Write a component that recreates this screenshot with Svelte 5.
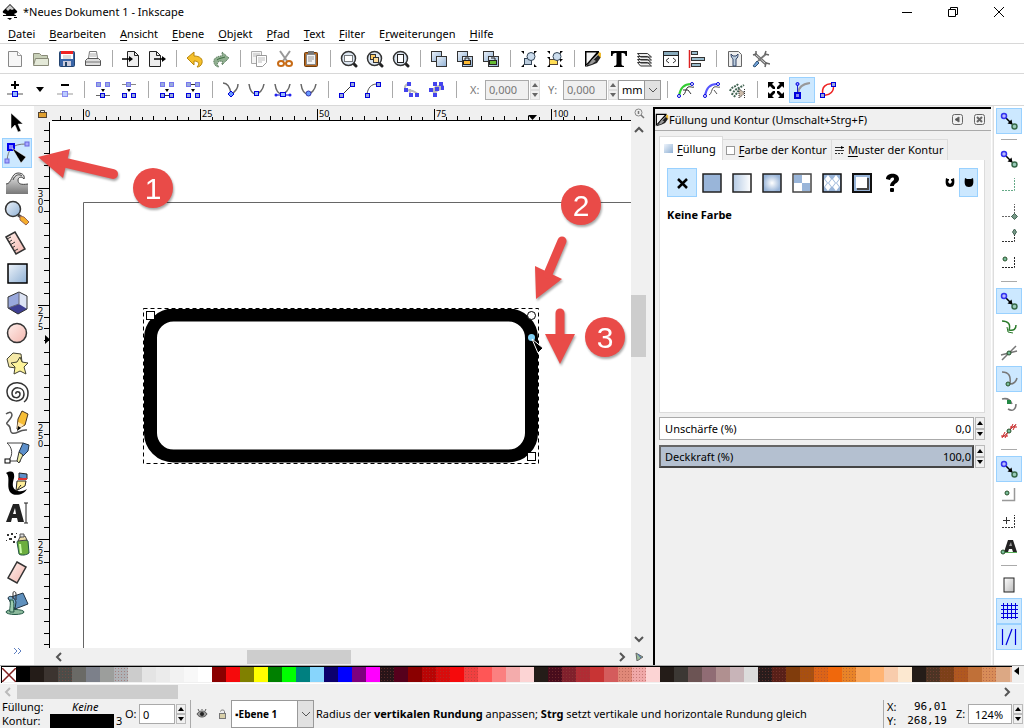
<script lang="ts">
  const menus = [
    ['', 'D', 'atei'],
    ['', 'B', 'earbeiten'],
    ['', 'A', 'nsicht'],
    ['', 'E', 'bene'],
    ['', 'O', 'bjekt'],
    ['', 'P', 'fad'],
    ['', 'T', 'ext'],
    ['', 'F', 'ilter'],
    ['E', 'r', 'weiterungen'],
    ['', 'H', 'ilfe']
  ];

  const sheet = (x: number, y: number) =>
    `<rect x="${x}.5" y="${y}.5" width="10" height="10" fill="url(#blue)" stroke="#333"/>`;
  const nodeBox = (x: number, y: number, c = '#00d') =>
    `<rect x="${x}.5" y="${y}.5" width="4" height="4" fill="#9ad" stroke="${c}"/>`;
  const magnifier =
    '<path d="M13 13l3 3" stroke="#222" stroke-width="3" stroke-linecap="round"/><circle cx="8.5" cy="8.5" r="7" fill="#dde7f2" stroke="#333" stroke-width="1.5"/>';
  const snapPair =
    '<path d="M6 6l6 6" stroke="#000" stroke-width="1.5"/><path d="M12.500 12.500l-5-1 4-4z"/><circle cx="4" cy="4" r="2.5" fill="#bbf" stroke="#33e" stroke-width="1.5"/><circle cx="14.5" cy="14.5" r="2.5" fill="#9cb" stroke="#386a4a" stroke-width="1.5"/>';
  const curve = '<path d="M1 3c1 7 4 10 7 10s7-4 8-10" fill="none" stroke="#666" stroke-width="1.5"/>';
  const dotGreen = (x: number, y: number) =>
    `<circle cx="${x}" cy="${y}" r="2" fill="#7b9" stroke="#285028"/>`;

  const icons: Record<string, string> = {
    new: '<path d="M2.500 1.500h9l4 4v11h-13z" fill="#f7f7f7" stroke="#888"/><path d="M11.500 1.500v4h4" fill="#fff" stroke="#999"/>',
    open: '<path d="M1.500 14.500v-11h6l2 2h6v9z" fill="#c8d0b8" stroke="#888a78"/><path d="M1.500 15.500l2-7h13v7z" fill="#e4e9d8" stroke="#888a78"/>',
    save: '<rect x="1.500" y="1.500" width="15" height="15" rx="1" fill="#3a66a8" stroke="#24446f"/><rect x="3" y="1" width="12" height="8" fill="#fff"/><rect x="3" y="1" width="12" height="3" fill="#e22"/><path d="M5 6h8M5 8h8" stroke="#bbb"/><rect x="5" y="11" width="8" height="5" fill="#ccd"/><rect x="7" y="12" width="2" height="4" fill="#246"/>',
    print: '<path d="M4.500 8.500l1-7h7l1 7" fill="#fff" stroke="#777"/><path d="M6 4h6M6 6h6" stroke="#aaa"/><path d="M1.500 15.500v-5l2-2h11l2 2v5z" fill="#ddd" stroke="#555"/><path d="M2 12h14" stroke="#777"/>',
    import: '<path d="M5.500 1.500h7l4 4v11h-11z" fill="#eee" stroke="#222"/><path d="M12.500 1.500v4h4" fill="none" stroke="#222"/><path d="M0 9h8" stroke="#000" stroke-width="1.500"/><path d="M11 9l-4-3v6z"/>',
    export: '<path d="M1.500 1.500h7l4 4v11h-11z" fill="#eee" stroke="#222"/><path d="M8.500 1.500v4h4" fill="none" stroke="#222"/><path d="M6 9h9" stroke="#000" stroke-width="1.500"/><path d="M18 9l-4-3v6z"/>',
    undo: '<path d="M1 8l7-6v4c6 0 9 3 8 7-1 3-3 4-5 4 3-3 2-6-3-6v4z" fill="#f5c02c" stroke="#b8860b"/>',
    redo: '<path d="M17 8l-7-6v4c-6 0-9 3-8 7 1 3 3 4 5 4-3-3-2-6 3-6v4z" fill="#8fae8f" stroke="#47694b" stroke-dasharray="1 1"/><path d="M5 10c2-2 6-2 8-3" stroke="#3c6b40" fill="none"/>',
    copy: '<path d="M1.500 1.500h10v12h-10z" fill="#f4f4f4" stroke="#aaa"/><path d="M6.500 5.500h10v7l-4 4h-6z" fill="#fff" stroke="#999"/><path d="M8 8h7M8 10h7M8 12h4M3 4h7M3 6h3" stroke="#bbb"/>',
    cut: '<path d="M4 1l7 10M14 1L7 11" stroke="#999" stroke-width="2"/><ellipse cx="5" cy="13.500" rx="3" ry="2.500" fill="none" stroke="#c76b16" stroke-width="2"/><ellipse cx="13" cy="13.500" rx="3" ry="2.500" fill="none" stroke="#c76b16" stroke-width="2"/>',
    paste: '<rect x="2.500" y="2.500" width="13" height="14" rx="1" fill="#b5661d" stroke="#6e3c0c"/><rect x="4.500" y="4.500" width="9" height="10" fill="#f4f4f4" stroke="#888"/><rect x="6" y="1" width="6" height="3" fill="#777"/><path d="M6 7h6M6 9h6M6 11h4" stroke="#999"/>',
    zoomSel: magnifier + '<rect x="4.500" y="5.500" width="8" height="6" fill="#fff" stroke="#000" stroke-dasharray="1 1"/>',
    zoomDraw: magnifier + '<rect x="4.500" y="4.500" width="5" height="5" fill="#fc6" stroke="#333"/><rect x="7.500" y="7.500" width="5" height="5" fill="#fd9" stroke="#333"/>',
    zoomPage: magnifier + '<rect x="5.500" y="4.500" width="6" height="8" fill="#fff" stroke="#222"/>',
    duplicate: sheet(1, 1) + sheet(6, 6),
    clone: sheet(1, 1) + sheet(6, 6) + '<rect x="7.500" y="10.500" width="7" height="4" fill="#fb3" stroke="#222"/><path d="M9 10V8h4v2" fill="none" stroke="#222"/>',
    unclone: sheet(1, 1) + sheet(6, 6) + '<rect x="7.500" y="10.500" width="7" height="4" fill="#6b3" stroke="#222"/><path d="M9 8h4v2" fill="none" stroke="#222"/>',
    group: '<rect x="4.500" y="8.500" width="7" height="6" fill="#bcd" stroke="#345"/><circle cx="11" cy="6.500" r="4" fill="#cde" stroke="#345"/><path d="M1 1h3v3zM17 1h-3v3zM1 17h3v-3zM17 17h-3v-3z"/>',
    ungroup: '<rect x="3.500" y="9.500" width="8" height="5" fill="#fd5" stroke="#543"/><circle cx="11" cy="6.500" r="4" fill="#cde" stroke="#345"/><path d="M1 1h3v3zM17 1h-3v3zM1 17h3v-3zM17 17h-3v-3zM1 7h3v3zM17 9h-3v3z"/>',
    fill: '<path d="M1 1h14v2L5 13l-4 4z"/><path d="M2.500 2.500h10L2.500 14z" fill="#f4f4f4"/><path d="M15 4l2 3-4 6-5 2-6 2 2-4 6-4z" fill="#222"/><path d="M15 2l2 1v5l-3-3z" fill="#eb3"/><path d="M9 9l3 2-4 3-4 1z" fill="#999"/>',
    text: '<path d="M1 1h16v5h-1.500c0-2-1-3-3-3h-1v11c0 1 1 2 2.500 2v1h-10v-1c1.500 0 2.500-1 2.500-2V3h-1c-2 0-3 1-3 3H1z"/>',
    layers: '<path d="M1.500 12.500h10l4 3.500h-11zM1.500 9.500h10l4 3.500h-11zM1.500 6.500h10l4 3.500h-11zM1.500 3.500h10l4 3.500h-11z" fill="#eee" stroke="#333"/>',
    xml: '<rect x="1.500" y="1.500" width="15" height="15" fill="#fff" stroke="#222"/><path d="M2 3.500h14" stroke="#8ab" stroke-width="3"/><path d="M2 5.500h14" stroke="#222"/><path d="M7 8l-3 2.500L7 13M11 8l3 2.500L11 13" fill="none" stroke="#333"/>',
    align: '<path d="M1.500 0v18" stroke="#d22" stroke-width="1.500"/><rect x="3.500" y="1.500" width="6" height="3" fill="#9bc" stroke="#333"/><rect x="3.500" y="7.500" width="13" height="3" fill="#9bc" stroke="#333"/><rect x="3.500" y="13.500" width="9" height="3" fill="#9bc" stroke="#333"/>',
    docProps: '<path d="M2.500 1.500h10l3 3v12h-13z" fill="#eee" stroke="#666"/><path d="M5 4c0 3 1 4 2 5v7h3V9c2-1 2-3 2-5l-2 2H7z" fill="#bcd" stroke="#346"/>',
    prefs: '<path d="M3 4l11 10" stroke="#666" stroke-width="3"/><path d="M3 4l11 10" stroke="#ddd"/><path d="M14 4L6 11" stroke="#777" stroke-width="2"/><path d="M4 1v3L1 5M14 1l-1 3 4 1M13 17l1-4 4 1" fill="none" stroke="#666" stroke-width="1.500"/><path d="M1 16l4-5 2 2-4 4z" fill="#6ea0d8" stroke="#357"/>',
    addNode: '<path d="M9 0v8M5 4h8" stroke="#000" stroke-width="2"/><path d="M1 13h16" stroke="#555"/><rect x="6.500" y="10.500" width="5" height="5" fill="#9bf" stroke="#00d"/>',
    delNode: '<path d="M5 4h8" stroke="#000" stroke-width="2"/><path d="M1 13h16" stroke="#999"/><rect x="6.500" y="10.500" width="5" height="5" fill="#bcf" stroke="#88e"/>',
    join: nodeBox(2, 1, '#77e') + nodeBox(11, 1, '#77e') + '<path d="M2 14.500h14" stroke="#666"/>' + nodeBox(6, 12) + '<path d="M9 11L7 8h4z"/>',
    break: '<path d="M2 3.500h14" stroke="#888"/>' + nodeBox(6, 1, '#77e') + nodeBox(2, 12) + nodeBox(11, 12) + '<path d="M9 11L7 8h4z"/>',
    joinSeg: nodeBox(2, 1, '#77e') + nodeBox(11, 1, '#77e') + '<path d="M5 14.500h8" stroke="#333"/>' + nodeBox(2, 12) + nodeBox(11, 12) + '<path d="M9 11L7 8h4z"/>',
    delSeg: '<path d="M5 3.500h8" stroke="#333"/>' + nodeBox(2, 1, '#77e') + nodeBox(11, 1, '#77e') + nodeBox(2, 12) + nodeBox(11, 12) + '<path d="M9 11L7 8h4z"/>',
    cusp: '<path d="M1 2c5 0 7 4 8 11 4-2 7-6 7-10" fill="none" stroke="#666" stroke-width="1.500"/><path d="M9 10l3 3-3 3-3-3z" fill="#69f" stroke="#00d"/>',
    smooth: curve + '<rect x="6.500" y="10.500" width="4" height="4" fill="#9bf" stroke="#00d"/>',
    symmetric: curve + '<path d="M2 14h13" stroke="#00d"/><circle cx="2" cy="14" r="1.500" fill="#22e"/><circle cx="16" cy="14" r="1.500" fill="#22e"/><rect x="6.500" y="11.500" width="5" height="4" fill="#9bf" stroke="#00d"/>',
    auto: curve + '<circle cx="8.500" cy="12.500" r="2.500" fill="#69f" stroke="#33a"/>',
    line: '<path d="M4 14L14 4" stroke="#333"/>' + nodeBox(1, 12) + nodeBox(12, 1),
    arc: '<path d="M3 13C4 7 7 3 13 3" fill="none" stroke="#555"/>' + nodeBox(1, 12) + nodeBox(12, 1),
    objPath: '<path d="M9 3C3 2 1 8 5 9s8 0 11 5M8 8v8" fill="none" stroke="#bbb" stroke-width="2"/><path d="M5 1h4v4H5zM2 7h4v4H2zM7 12h4v4H7zM13 12h4v4h-4z" fill="#44e"/>',
    strokePath: '<path d="M4 10c1-5 6-7 12-6l-2 5c-4 0-6 2-7 7z" fill="#bbb"/><path d="M5 1h4v4H5zM11 1h4v4h-4zM1 7h4v4H1zM7 6h4v4H7zM13 5h3v4h-3zM5 12h4v4H5z" fill="#44e"/>',
    clipPath: '<path d="M2 15C3 8 7 3 14 3" fill="none" stroke="#3c3" stroke-width="2"/><path d="M6 14c3-1 2-6 5-8 3-1 4 1 6 0M6 9h5l3 4" fill="none" stroke="#333"/><circle cx="2" cy="15" r="1.500" fill="#fff" stroke="#00d"/><circle cx="15" cy="3" r="1.500" fill="#fff" stroke="#00d"/>',
    maskPath: '<path d="M2 15C3 8 7 3 14 3" fill="none" stroke="#55f" stroke-width="2"/><path d="M6 14c3-1 2-6 5-8 3-1 4 1 6 0M11 9l3 4" fill="none" stroke="#555"/><circle cx="2" cy="15" r="1.500" fill="#fff" stroke="#00d"/><circle cx="15" cy="3" r="1.500" fill="#fff" stroke="#00d"/>',
    lpe: '<path d="M1 10c2-5 6-4 8-7M3 14c2-6 6-6 12-10M5 16l5-7" fill="none" stroke="#465" stroke-width="2" stroke-dasharray="2 1"/><path d="M10 8v9l6-5zM15.500 8v9" fill="#cba" stroke="#333" stroke-dasharray="1 1"/>',
    transform: '<path d="M1 1h6L5 3l3 3v2H6L3 5 1 7zM17 1h-6l2 2-3 3v2h2l3-3 2 2zM1 17h6l-2-2 3-3v-2H6l-3 3-2-2zM17 17h-6l2-2-3-3v-2h2l3 3 2-2z"/>',
    handles: '<path d="M5 13C5 6 9 3 17 2" fill="none" stroke="#999" stroke-width="2"/><path d="M4.500 12V3" stroke="#22c"/><circle cx="4.500" cy="3" r="1.500" fill="#88f" stroke="#00d"/><rect x="2" y="12" width="5" height="5" fill="#88e" stroke="#00d" stroke-width="2"/>',
    outline: '<path d="M4 14C2 6 7 2 14 3c2 7-3 12-10 11z" fill="none" stroke="#e22" stroke-width="1.500"/>' + nodeBox(1, 12) + nodeBox(12, 1),
    snap: snapPair,
    bbox: '<path d="M2 14.500h12.500V2" fill="none" stroke="#6a8" stroke-dasharray="2 1"/>',
    bboxCorner: '<path d="M2 14.500h12.500V2" fill="none" stroke="#666" stroke-dasharray="2 1"/><path d="M14.500 11.500l3 3-3 3-3-3z" fill="#798" stroke="#465"/>',
    bboxEdge: '<path d="M2 13.500h12.500V4" fill="none" stroke="#333" stroke-dasharray="2 1"/><path d="M14.500 1l2 3-2 3-2-3z" fill="#798" stroke="#465"/>',
    bboxMid: '<path d="M2 13.500h12.500V2" fill="none" stroke="#222" stroke-dasharray="2 1"/>' + dotGreen(5, 5),
    snapPath: '<path d="M2 3c6 0 9 3 7 9 5 1 7-1 7-5" fill="none" stroke="#2a7a2a" stroke-width="1.500"/><path d="M7 9l1 5 5 1" fill="none" stroke="#2a7a2a"/>',
    snapCross: '<path d="M2 16L16 2M1 11L17 7" stroke="#777" stroke-width="1.500"/>' + dotGreen(9, 9),
    snapCusp: '<path d="M2 2c7 0 9 4 8 12 4 0 6-2 7-6" fill="none" stroke="#777" stroke-width="1.500"/>' + dotGreen(8, 14),
    snapSmooth: '<path d="M2 3c4-1 8 0 10 5M8 13c5 3 8 0 8-5" fill="none" stroke="#777" stroke-width="1.500"/><rect x="7" y="4" width="4" height="4" fill="#284"/>',
    snapMid: '<path d="M3 15L15 3" stroke="#a66"/><path d="M2 16l3-6M5 16l3-6M10 8l3-6M13 8l3-6M1 14h7M10 5h7" stroke="#c22"/>' + dotGreen(9, 9),
    snapCenter: '<path d="M2 14.500h12.500V2" fill="none" stroke="#999" stroke-width="1.500"/>' + dotGreen(7, 7),
    snapRot: '<path d="M3 8.500h7M6.500 5v7" stroke="#333"/><path d="M2 15.500h12.500V3" fill="none" stroke="#333" stroke-dasharray="2 1"/>',
    snapText: '<path d="M4 14L8 2h5l4 12h-4l-1-3H9l-1 3z" fill="#222"/><path d="M9 8h3l-1-4z" fill="#999"/><path d="M1 14.500h16" stroke="#5a5"/>' + dotGreen(3, 14),
    snapPage: '<rect x="4" y="2" width="10" height="14" fill="url(#gray)" stroke="#222"/>',
    snapGrid: '<path d="M3.500 1v16M7.500 1v16M11.500 1v16M15.500 1v16M1 3.500h17M1 7.500h17M1 11.500h17M1 15.500h17" stroke="#00d" />',
    snapGuide: '<path d="M2.500 1v16M15.500 1v16M6 17L12 1" stroke="#00d" fill="none" stroke-width="1.200"/>'
  };

  const tools: [string, string][] = [
    ['Auswählen', '<path d="M7 3v16l4-4 3 7 3-1-3-7h5z" stroke="#fff" stroke-width=".5"/>'],
    ['Knoten', '<path d="M3 21C4 9 8 4 22 4" fill="none" stroke="#777"/><rect x="1" y="19" width="4" height="4" fill="#aaf" stroke="#66d"/><rect x="21" y="2" width="4" height="4" fill="#aaf" stroke="#66d"/><rect x="4" y="4" width="6" height="6" fill="#88f" stroke="#00e" stroke-width="2"/><path d="M8 8l14 9-5 6z" stroke="#fff" stroke-width=".5"/>'],
    ['Optimieren', '<path d="M2 24V14c6 0 6-11 12-11 5 0 7 3 6 6-2-3-6-2-6 1 0 4 3 5 10 4v10z" fill="url(#wave)"/><path d="M2 14c6 0 5-11 12-11 5 0 7 3 6 6-2-3-6-2-6 1 0 4 3 5 10 4M9 10c2-6 7-6 9-4" fill="none" stroke="#444"/>'],
    ['Zoom', '<path d="M14 15l3 2" stroke="#444" stroke-width="3"/><path d="M16 16l4 1 5 5-3 3-6-5z" fill="#f5ad2c" stroke="#965"/><circle cx="9" cy="9" r="7.500" fill="url(#blue)" stroke="#333" stroke-width="1.500"/>'],
    ['Maßband', '<path d="M2 7l9-5 10 17-9 5z" fill="url(#pink)" stroke="#333" stroke-width="1.500"/><path d="M3 9l4-2M5 12l3-2M6 15l5-3M8 18l3-2M10 21l4-2" stroke="#333"/>'],
    ['Rechteck', '<rect x="4" y="4" width="19" height="19" fill="url(#blue)" stroke="#000" stroke-width="1.500"/>'],
    ['3D-Box', '<path d="M4 7l11-5 8 4v13l-9 5-10-6z" fill="#99a8dc"/><path d="M15 2v13l8 4V6z" fill="#dde4f5"/><path d="M15 14l8 5-9 5-10-6z" fill="#3e3e92"/><path d="M4 7l11-5 8 4v13l-9 5-10-6z" fill="none" stroke="#333"/><path d="M15 2v12L4 18" fill="none" stroke="#667"/>'],
    ['Kreis', '<circle cx="13" cy="13" r="9.500" fill="url(#pink)" stroke="#333" stroke-width="1.500"/>'],
    ['Stern', '<path d="M3 9l6-6 8 1 1 8-6 6-7-1z" fill="#f5e9a8" stroke="#443"/><path d="M16 7l2 5 6 1-4 4 2 7-6-3-6 3 1-7-4-4 6-1z" fill="#fdf39a" stroke="#443"/>'],
    ['Spirale', '<path d="M12 14c-1-3 4-3 4 0 0 5-8 5-8-1 0-7 12-7 12 1 0 10-17 9-17-2C3 -1 24 0 24 13c0 4-1 7-4 9" fill="none" stroke="#333" stroke-width="1.500"/>'],
    ['Freihand', '<path d="M2 4c5-4 8 0 4 5s-4 4-2 6c4 2 1 7 4 8 5 2 7-4 15-3" fill="none" stroke="#555" stroke-width="1.500"/><path d="M13 19l1-10 4-8 6 3-3 11z" fill="#f6bd36" stroke="#432"/><path d="M13 20l1-8 6 3z" fill="#ffe4b0"/><path d="M13 21l1-5 3 2z"/>'],
    ['Bézier', '<path d="M3 3h16M3 3c5 4 7 12 1 18h13" fill="none" stroke="#444"/><path d="M15 12l4-9 6 2-1 6-5 5z" fill="#5c8fca" stroke="#234"/><path d="M15 12l4 3-4 8-2-2z" fill="#eea" stroke="#333"/><rect x="1" y="19" width="5" height="4" fill="#fff" stroke="#000"/>'],
    ['Kalligrafie', '<path d="M2 3c6-3 9-1 8 5-2 7-2 11 4 13 4 1 7-1 9-2-3 6-13 8-17 3C2 16 7 7 2 3z"/><path d="M15 3l8 1v5l-8-1z" fill="#5c8fca" stroke="#222"/><path d="M14 8h9v2h-9z" fill="#d33"/><path d="M12 21l1-10h9l-1 5z" fill="#fe9" stroke="#222"/><path d="M13 20l4-5" stroke="#222"/>'],
    ['Text', '<path d="M2 22L9 4h6l5 18h-6l-1-4H8l-1 4zM9 14h3l-1-6z" fill-rule="evenodd" fill="#222"/><path d="M20 3h4M22 3v20M20 23h4" stroke="#222" fill="none"/>'],
    ['Sprühdose', '<path d="M13 12c0-2 10-3 11-1l1 12c-2 2-8 3-10 1z" fill="#6cae3e" stroke="#254"/><path d="M16 14l1 9" stroke="#cfa" stroke-width="2"/><path d="M14 11l2-4 5-1 2 4z" fill="#eda" stroke="#444"/><path d="M16 4h4v3h-4z" fill="#ddd" stroke="#555"/><path d="M3 4h2v2H3zM7 3h2v2H7zM5 8h3v2H5zM10 6h2v2h-2zM9 11h2v2H9zM2 10h1v1H2zM12 3h1v1h-1z" fill="#333"/>'],
    ['Radierer', '<path d="M13 2l9 5-9 16-9-5z" fill="url(#pink)" stroke="#333" stroke-width="1.500"/>'],
    ['Farbeimer', '<ellipse cx="11" cy="22" rx="9" ry="2.500" fill="#8cba9c" stroke="#254"/><path d="M4 8l15-5 5 11-13 5z" fill="#5f90bd" stroke="#234"/><path d="M4 8c1-3 6-2 8 4l-1 7z" fill="#7fb0cc" stroke="#234"/><path d="M6 10c1 6-1 9 0 12h4c-1-4 1-7-1-12z" fill="#9ccbae" stroke="#254"/><path d="M9 9V3c0-2 3-2 3 1v6" fill="none" stroke="#333"/>']
  ];

  const commands = [
    ['new', 'open', 'save', 'print'],
    ['import', 'export'],
    ['undo', 'redo'],
    ['copy', 'cut', 'paste'],
    ['zoomSel', 'zoomDraw', 'zoomPage'],
    ['duplicate', 'clone', 'unclone'],
    ['group', 'ungroup'],
    ['fill', 'text', 'layers', 'xml', 'align'],
    ['docProps', 'prefs']
  ];

  const nodeGroups = [
    ['join', 'break'],
    ['joinSeg', 'delSeg'],
    ['cusp', 'smooth', 'symmetric', 'auto'],
    ['line', 'arc'],
    ['objPath', 'strokePath']
  ];

  const snapGroups = [
    ['snap'],
    ['snap', 'bbox', 'bboxCorner', 'bboxEdge', 'bboxMid'],
    ['snap', 'snapPath', 'snapCross', 'snapCusp', 'snapSmooth', 'snapMid'],
    ['snap', 'snapCenter', 'snapRot', 'snapText'],
    ['snapPage', 'snapGrid', 'snapGuide']
  ];
  const activeSnaps = ['0-0', '2-0', '2-3', '3-0', '4-1', '4-2'];

  const paints: [string, string][] = [
    ['Einfache Farbe', '<rect x="1" y="1" width="18" height="18" fill="#99b5d9" stroke="#222" stroke-width="1.500"/>'],
    ['Linearer Farbverlauf', '<rect x="1" y="1" width="18" height="18" fill="url(#linear)" stroke="#222" stroke-width="1.500"/>'],
    ['Radialer Farbverlauf', '<rect x="1" y="1" width="18" height="18" fill="url(#radial)" stroke="#222" stroke-width="1.500"/>'],
    ['Netz', '<rect x="1" y="1" width="18" height="18" fill="#fff" stroke="#444" stroke-width="1.500"/><path d="M2 2h8v8H2zM10 10h8v8h-8z" fill="#99b5d9"/>'],
    ['Muster', '<rect x="1" y="1" width="18" height="18" fill="#99b5d9" stroke="#111" stroke-width="1.500"/><path d="M6 2l3 4-3 4-3-4zM14 2l3 4-3 4-3-4zM6 10l3 4-3 4-3-4zM14 10l3 4-3 4-3-4zM10 6l3 4-3 4-3-4zM2 6l3 4-3 4zM18 6l-3 4 3 4z" fill="#fff"/>'],
    ['Farbfeld', '<rect x="1" y="1" width="18" height="18" fill="#99b5d9" stroke="#111" stroke-width="2"/><path d="M5 16h11V5" fill="none" stroke="#444" stroke-width="2"/><rect x="4" y="4" width="11" height="11" fill="#fff"/>'],
    ['Unbestimmt', '<path d="M4 6c0-7 13-7 13 0 0 4-5 4-5 7H8c0-4 4-5 4-7s-3-2-4 1z"/><rect x="8" y="15" width="4" height="4" rx="1"/>']
  ];

  const palette =
    '000000 241c18 3c3430 4c4c48* 6a6a66 7c808a 9c9e9c b0b2b6* cccccc e4e4e4 ebebeb f2f2f2 f8f8f8 ffffff 8a0000 f60a0c 808000 ffff00 008000 00ff00 008080 87d5fc 0c006c 0000ff 7e007e ff00ff 281418* 56001c 8a0000 b80404* d80c0c* f60a0c f04040* ff5656 fb8080 f4acac fcd4d4 241c18 480c1c* 80202c* b02c34* c83434 d45c5c e08878* f0a8a8* fcd4d4 241c18 3c3834 6c5454 906c74 b09090 c8b4b8 dcdcdc 281c1c* 582018* 803c0c a85010* dc6418* f0680c e88428* f8a458 ffb474 f8ccac fce8d0 241c18 4c3424* 7c4018* b05820* c07038 d88c58* dca884 ecc4b0'
      .split(' ')
      .map((c) => ({ color: '#' + c.slice(0, 6), dither: c.endsWith('*') }));

  // 2.5 mm per tick at 124 %
  const step = 11.7;
  let rulerWidth = $state(0);
  let rulerHeight = $state(0);
  const hTicks = $derived(
    Array.from({ length: Math.max(0, Math.floor((rulerWidth - 32) / step) + 3) }, (_, i) => i - 2)
  );
  const vTicks = $derived(
    Array.from({ length: Math.max(0, Math.floor((rulerHeight - 67) / step) + 6) }, (_, i) => i - 5)
  );

  let x = $state('0,000');
  let y = $state('0,000');
  let blur = $state('0,0');
  let opacity = $state('100,0');
  let objectOpacity = $state('0');
  let zoom = $state('124%');
</script>

{#snippet icon(name: string)}
  <svg width="18" height="18" viewBox="0 0 18 18" aria-hidden="true">{@html icons[name]}</svg>
{/snippet}

{#snippet tool(name: string, active = false)}
  <button class="tb" class:active aria-label={name}>{@render icon(name)}</button>
{/snippet}

{#snippet spin(what: string, muted = false)}
  <span class="spin" class:muted>
    <button aria-label="{what} erhöhen"><svg width="6" height="4"><path d="M0 4l3-4 3 4z" /></svg></button>
    <button aria-label="{what} verringern"><svg width="6" height="4"><path d="M0 0l3 4 3-4z" /></svg></button>
  </span>
{/snippet}

{#snippet chevron(d: string)}
  <svg class="chevron" width="10" height="10" viewBox="0 0 10 10" aria-hidden="true"><path {d} /></svg>
{/snippet}

<svg class="defs" width="0" height="0" aria-hidden="true">
  <defs>
    <linearGradient id="blue" x2="1" y2="1"><stop stop-color="#eef4fb" /><stop offset="1" stop-color="#8fb0d4" /></linearGradient>
    <linearGradient id="linear" x2="1"><stop stop-color="#b4cae4" /><stop offset="1" stop-color="#fff" /></linearGradient>
    <radialGradient id="radial"><stop stop-color="#fff" /><stop offset="1" stop-color="#99b5d9" /></radialGradient>
    <linearGradient id="pink" x2="1" y2="1"><stop stop-color="#fff0ec" /><stop offset="1" stop-color="#f3b6ae" /></linearGradient>
    <linearGradient id="gray" x2="1" y2="1"><stop stop-color="#fff" /><stop offset="1" stop-color="#bbb" /></linearGradient>
    <linearGradient id="wave" x2="0" y2="1"><stop stop-color="#eee" /><stop offset="1" stop-color="#777" /></linearGradient>
  </defs>
</svg>

<div class="app">
  <header class="titlebar">
    <svg width="18" height="18" viewBox="0 0 18 18" aria-hidden="true">
      <path d="M9 1l7 7c1 2-2 2-3 3 0 1 3 1 2 2H4c-1-1 2-1 1-2-2-1-4-1-3-3z" />
      <path d="M9 2l4 4-2 1-2-1-2 2-2-2z" fill="#ccc" />
      <path d="M6 15h5l-2 2zM13 14h3v1h-3zM2 12h2v1H2z" />
    </svg>
    <h1>*Neues Dokument 1 - Inkscape</h1>
    <div class="window-controls">
      <button aria-label="Minimieren"><svg width="11" height="11"><path d="M0 5.500h10" /></svg></button>
      <button aria-label="Wiederherstellen"><svg width="11" height="11"><path d="M.5 2.500h7v7h-7zM2.500 2V.5h7v7H8" /></svg></button>
      <button aria-label="Schließen"><svg width="11" height="11"><path d="M0 0l10 10M10 0L0 10" /></svg></button>
    </div>
  </header>

  <nav class="menubar">
    {#each menus as [before, key, after]}
      <button>{before}<u>{key}</u>{after}</button>
    {/each}
  </nav>

  <div class="toolbar">
    {#each commands as group, i}
      {#if i}<span class="sep"></span>{/if}
      {#each group as name}{@render tool(name)}{/each}
    {/each}
  </div>

  <div class="toolbar controls">
    {@render tool('addNode')}
    <button class="tb drop" aria-label="Knoten einfügen"><svg width="8" height="5"><path d="M0 0h8L4 5z" /></svg></button>
    {@render tool('delNode')}
    {#each nodeGroups as group}
      <span class="sep"></span>
      {#each group as name}{@render tool(name)}{/each}
    {/each}
    <span class="sep"></span>
    <div class="coord">
      <label for="node-x">X:</label>
      <input id="node-x" bind:value={x} disabled />
      {@render spin('X', true)}
    </div>
    <div class="coord">
      <label for="node-y">Y:</label>
      <input id="node-y" bind:value={y} disabled />
      {@render spin('Y', true)}
    </div>
    <div class="select unit">
      <select aria-label="Einheit"><option>mm</option></select>
      <span class="select-arrow">{@render chevron('M1 3l4 4 4-4')}</span>
    </div>
    <span class="sep"></span>
    {@render tool('clipPath')}
    {@render tool('maskPath')}
    {@render tool('lpe')}
    <span class="sep"></span>
    {@render tool('transform')}
    {@render tool('handles', true)}
    {@render tool('outline')}
  </div>

  <main>
    <aside class="toolbox">
      {#each tools as [name, art], i}
        <button class:active={i === 1} aria-label={name}>
          <svg width="26" height="26" viewBox="0 0 26 26" aria-hidden="true">{@html art}</svg>
        </button>
      {/each}
      <button class="more" aria-label="Weitere Werkzeuge">
        <svg width="9" height="7"><path d="M1 0l3 3-3 3M5 0l3 3-3 3" /></svg>
      </button>
    </aside>

    <section class="editor">
      <button class="corner" aria-label="Hilfslinien sperren">
        <svg width="9" height="9"><path d="M2.500 4V1.500h4V4" fill="none" stroke="#444" /><rect x=".5" y="3.500" width="8" height="5" fill="#e0a030" stroke="#543" /></svg>
      </button>
      <div class="ruler" bind:clientWidth={rulerWidth}>
        <svg width="100%" height="100%">
          <path d="M2 14.500h4000" stroke="#000" />
          {#each hTicks as i}
            <path d="M{Math.round(33 + i * step)}.5 {i % 10 === 0 ? 3 : i % 2 ? 11 : 10}V15" stroke="#000" />
            {#if i % 10 === 0 && 55 + i * step < rulerWidth}
              <text x={Math.round(35 + i * step)} y="11">{i * 2.5}</text>
            {/if}
          {/each}
          <path d="M478 9h9l-4.500 5z" />
        </svg>
      </div>
      <button class="corner" aria-label="Zoom anpassen">
        <svg width="11" height="11"><circle cx="4.500" cy="4.500" r="3.500" fill="#eee" stroke="#888" /><path d="M4.500 3v3M7 7l3 3" stroke="#777" stroke-width="1.500" /></svg>
      </button>

      <div class="ruler" bind:clientHeight={rulerHeight}>
        <svg width="100%" height="100%">
          <path d="M15.500 1V4000" stroke="#000" />
          {#each vTicks as i}
            <path d="M{i % 10 === 0 ? 4 : 10} {Math.round(67 + i * step)}.5H16" stroke="#000" />
            {#if i % 10 === 0 && 95 + i * step < rulerHeight}
              {#each String(300 - i * 2.5) as digit, n}
                <text x="4" y={Math.round(76 + i * step + n * 8)}>{digit}</text>
              {/each}
            {/if}
          {/each}
          <path d="M11 214v9l5-4.500z" />
        </svg>
      </div>
      <div class="canvas">
        <svg width="100%" height="100%">
          <g transform="translate(-50 -121)">
            <path d="M4000 202.500H83.500V4000" fill="none" stroke="#666" />
            <rect x="150.500" y="315" width="381" height="141" rx="23" fill="none" stroke="#000" stroke-width="13" />
            <rect x="143.500" y="308.500" width="395" height="155" fill="none" stroke="#fff" />
            <rect x="143.500" y="308.500" width="395" height="155" fill="none" stroke="#000" stroke-dasharray="4 3" />
            <g fill="#fff" stroke="#000">
              <rect x="146.500" y="311.500" width="8" height="8" />
              <rect x="527.500" y="452.500" width="8" height="8" />
              <circle cx="531.500" cy="315.500" r="4" />
            </g>
            <circle cx="531.500" cy="337.500" r="3.500" fill="#7fd0f5" />
            <path d="M532 339l11 9-5 5z" stroke="#fff" />
          </g>
        </svg>
      </div>
      <div class="scroll vertical">
        {@render chevron('M1 7l4-4 4 4')}
        <span class="thumb"></span>
        {@render chevron('M1 3l4 4 4-4')}
      </div>

      <span></span>
      <div class="scroll horizontal">
        {@render chevron('M7 1L3 5l4 4')}
        <span class="thumb"></span>
        {@render chevron('M3 1l4 4-4 4')}
      </div>
      <button class="corner" aria-label="Farbmanagement">
        <svg width="9" height="9"><path d="M1 1l7 4-6 4z" fill="#9b9" stroke="#666" /><path d="M3 2l3 4" stroke="#46a" /></svg>
      </button>

      <svg class="callouts" width="100%" height="100%">
        <g transform="translate(-34 -106)" fill="#e94b48" stroke="#e94b48">
          <path d="M38 157l32-8-7 29z" stroke="none" />
          <path d="M62 162l51 12" stroke-width="10" stroke-linecap="round" />
          <path d="M536 299l-1-33 27 13z" stroke="none" />
          <path d="M562 241l-14 33" stroke-width="9" stroke-linecap="round" />
          <path d="M560 364l-15-30h30z" stroke="none" />
          <path d="M560 313v24" stroke-width="9" stroke-linecap="round" />
          {#each [[153, 188], [581, 205], [605, 337]] as [cx, cy], i}
            <circle {cx} {cy} r="20" stroke="none" />
            <text x={cx} y={cy + 11}>{i + 1}</text>
          {/each}
        </g>
      </svg>
    </section>

    <section class="dialog">
      <header>
        <svg width="14" height="14" viewBox="0 0 18 18" aria-hidden="true">{@html icons.fill}</svg>
        <h2>Füllung und Kontur (Umschalt+Strg+F)</h2>
        <button aria-label="Andocken"><svg width="11" height="11"><rect x=".5" y=".5" width="10" height="10" rx="2" /><path d="M7 3v5L3 5.500z" fill="#555" /></svg></button>
        <button aria-label="Dialog schließen"><svg width="11" height="11"><rect x=".5" y=".5" width="10" height="10" rx="2" /><path d="M3 3l5 5M8 3L3 8" stroke-width="2" /></svg></button>
      </header>

      <div class="tabs" role="tablist">
        <button role="tab" aria-selected="true">
          <svg width="9" height="9"><rect width="9" height="9" fill="url(#blue)" /></svg>
          <span><u>F</u>üllung</span>
        </button>
        <button role="tab" aria-selected="false">
          <svg width="9" height="9"><rect x=".5" y=".5" width="8" height="8" fill="#fff" stroke="#999" /></svg>
          <span><u>F</u>arbe der Kontur</span>
        </button>
        <button role="tab" aria-selected="false">
          <svg width="9" height="9"><path d="M0 1.500h9M0 4.500h9" stroke="#333" /><path d="M0 7.500h9" stroke="#333" stroke-dasharray="2 1" /><path d="M6 0l3 1.500L6 3z" /></svg>
          <span><u>M</u>uster der Kontur</span>
        </button>
      </div>

      <div class="page">
        <div class="paints">
          <button class="active" aria-label="Keine Farbe">
            <svg width="20" height="20"><path d="M6 6l9 9M15 6l-9 9" stroke="#000" stroke-width="2.500" /></svg>
          </button>
          {#each paints as [name, art]}
            <button aria-label={name}><svg width="20" height="20">{@html art}</svg></button>
          {/each}
          <button class="rule first" aria-label="Ungerade Füllregel">
            <svg width="10" height="10"><path d="M1 0l2 1h4l2-1c1 6 0 9-4 9S0 6 1 0z" /><path d="M4 0h2v2l1 2-2 2-2-2 1-2z" fill="#fff" /></svg>
          </button>
          <button class="rule active" aria-label="Füllregel ungleich null">
            <svg width="10" height="10"><path d="M1 0l2 1h4l2-1c1 6 0 9-4 9S0 6 1 0z" /></svg>
          </button>
        </div>
        <strong>Keine Farbe</strong>
      </div>

      <div class="slider">
        <div class="track">
          <label for="blur">Unschärfe (%)</label>
          <input id="blur" bind:value={blur} />
        </div>
        {@render spin('Unschärfe')}
      </div>
      <div class="slider full">
        <div class="track">
          <label for="opacity">Deckkraft (%)</label>
          <input id="opacity" bind:value={opacity} />
        </div>
        {@render spin('Deckkraft')}
      </div>
    </section>

    <aside class="snapbar">
      {#each snapGroups as group, g}
        {#if g}<span class="hsep"></span>{/if}
        {#each group as name, n}{@render tool(name, activeSnaps.includes(`${g}-${n}`))}{/each}
      {/each}
    </aside>
  </main>

  <div class="palette">
    <div class="swatches">
      <button class="none" aria-label="Keine"><svg width="14" height="14"><path d="M0 0l14 14M14 0L0 14" stroke="#802020" stroke-width="1.500" /></svg></button>
      {#each palette as { color, dither }}
        <button class:dither style="background-color: {color}" aria-label={color}></button>
      {/each}
    </div>
    <button class="palette-menu" aria-label="Palette wählen"><svg width="5" height="8"><path d="M5 0v8L0 4z" /></svg></button>
  </div>

  <div class="palette-scroll">
    {@render chevron('M7 1L3 5l4 4')}
    <span class="thumb"></span>
    {@render chevron('M3 1l4 4-4 4')}
  </div>

  <footer>
    <div class="style">
      <span>Füllung:</span><em>Keine</em><span></span>
      <span>Kontur:</span><span class="stroke"></span><span>3</span>
    </div>
    <div class="field">
      <label for="master-opacity">O:</label>
      <input id="master-opacity" bind:value={objectOpacity} />
      {@render spin('Deckkraft des Objekts')}
    </div>
    <div class="layer">
      <button class="eye" aria-label="Ebene ausblenden">
        <svg width="12" height="10"><path d="M1 5c2-4 8-4 10 0-2 4-8 4-10 0z" fill="#999" stroke="#555" /><circle cx="6" cy="5" r="2" fill="#222" /><path d="M3 2L2 0M6 1V0M9 2l1-2" stroke="#555" /></svg>
      </button>
      <button aria-label="Ebene sperren">
        <svg width="9" height="10"><path d="M2.500 2.500c0-2 4-2 4 0V5" fill="none" stroke="#777" /><rect x="1.500" y="4.500" width="6" height="5" fill="#d8cfa8" stroke="#777" /></svg>
      </button>
      <div class="select">
        <select aria-label="Ebene"><option>▪Ebene 1</option></select>
        <span class="select-arrow">{@render chevron('M1 3l4 4 4-4')}</span>
      </div>
    </div>
    <p>Radius der <b>vertikalen Rundung</b> anpassen; <b>Strg</b> setzt vertikale und horizontale Rundung gleich</p>
    <dl>
      <dt>X:</dt><dd>96,01</dd>
      <dt>Y:</dt><dd>268,19</dd>
    </dl>
    <div class="field zoom">
      <label for="zoom">Z:</label>
      <input id="zoom" bind:value={zoom} />
      {@render spin('Zoom')}
    </div>
  </footer>
</div>

<style>
  :global(body) {
    margin: 0;
    background: #fff;
  }

  .defs {
    position: absolute;
  }

  .app {
    display: flex;
    flex-direction: column;
    min-height: 100vh;
    overflow: hidden;
    background: #fff;
    color: #000;
    font: 11px/14px "Noto Sans", "Open Sans", sans-serif;
  }

  .app * {
    box-sizing: border-box;
  }

  .app svg {
    display: block;
    flex-shrink: 0;
  }

  button,
  input,
  select {
    margin: 0;
    padding: 0;
    border: 0;
    border-radius: 0;
    background: none;
    color: inherit;
    font: inherit;
  }

  h1,
  h2,
  p,
  dl,
  dd {
    margin: 0;
    font: inherit;
  }

  u {
    text-underline-offset: 2px;
  }

  /* title and menu */
  .titlebar {
    display: flex;
    align-items: center;
    height: 24px;
    padding-left: 1px;
  }

  .titlebar h1 {
    flex: 1;
    padding-left: 4px;
  }

  .window-controls {
    display: flex;
    padding-right: 2px;
  }

  .window-controls button {
    display: grid;
    place-items: center;
    width: 46px;
    height: 22px;
  }

  .window-controls path {
    fill: none;
    stroke: #000;
  }

  .menubar {
    display: flex;
    gap: 14px;
    height: 20px;
    padding-left: 8px;
    border-bottom: 1px solid #d8d8d8;
  }

  /* toolbars */
  .toolbar {
    display: flex;
    align-items: center;
    height: 30px;
    padding-left: 2px;
    border-bottom: 1px solid #d8d8d8;
  }

  .controls {
    height: 32px;
  }

  .tb {
    display: grid;
    place-items: center;
    flex: none;
    width: 26px;
    height: 26px;
  }

  .tb.drop {
    width: 24px;
  }

  .active {
    background: #cce8ff;
    box-shadow: inset 0 0 0 1px #99d1ff;
  }

  .sep {
    flex: none;
    width: 12px;
    height: 17px;
    background: linear-gradient(#aaa, #aaa) 6px 0 / 1px 100% no-repeat;
  }

  .coord {
    display: flex;
    align-items: center;
    padding-left: 8px;
    color: #777;
  }

  .coord label {
    width: 15px;
  }

  .coord input {
    width: 44px;
    height: 20px;
    padding-left: 3px;
    border: 1px solid #aaa;
    background: #f0f0f0;
  }

  .spin {
    display: flex;
    flex-direction: column;
    width: 10px;
    height: 20px;
    margin-left: 1px;
  }

  .spin button {
    display: grid;
    place-items: center;
    flex: 1;
    border: 1px solid #bbb;
    background: #f0f0f0;
  }

  .spin.muted button {
    border-color: #ddd;
  }

  .muted path {
    fill: #666;
  }

  .select {
    position: relative;
    height: 20px;
  }

  .select select {
    appearance: none;
    width: 100%;
    height: 100%;
    padding-left: 3px;
    border: 1px solid #999;
    background: #fff;
  }

  .select-arrow {
    position: absolute;
    inset: 0 0 0 auto;
    display: grid;
    place-items: center;
    width: 17px;
    border: 1px solid #999;
    background: #e1e1e1;
    pointer-events: none;
  }

  .unit {
    width: 43px;
  }

  .chevron path {
    fill: none;
    stroke: #555;
    stroke-width: 2;
  }

  .select-arrow .chevron path {
    stroke-width: 1;
  }

  /* work area */
  main {
    display: flex;
    flex: 1;
    background: #f0f0f0;
  }

  .toolbox {
    display: flex;
    flex-direction: column;
    flex: none;
    width: 34px;
    padding: 2px;
    background: #fff;
  }

  .toolbox button {
    display: grid;
    place-items: center;
    height: 30px;
  }

  .toolbox .more {
    height: 16px;
    margin-top: auto;
    margin-bottom: 4px;
  }

  .more path {
    fill: none;
    stroke: #5f7fc0;
  }

  .editor {
    position: relative;
    display: grid;
    grid-template: 15px 1fr 17px / 16px 1fr 17px;
    flex: 1;
    min-width: 0;
  }

  .corner {
    display: grid;
    place-items: center;
  }

  .ruler,
  .canvas {
    position: relative;
    overflow: hidden;
  }

  .ruler svg,
  .canvas svg,
  .callouts {
    position: absolute;
    inset: 0;
  }

  .ruler text {
    font-size: 9px;
  }

  .canvas {
    background: #fff;
  }

  .callouts {
    overflow: visible;
    pointer-events: none;
    filter: drop-shadow(1px 2px 1px rgba(0, 0, 0, 0.35));
  }

  .callouts text {
    fill: #fff;
    stroke: none;
    font: 30px "Liberation Sans", sans-serif;
    text-anchor: middle;
  }

  .scroll {
    display: flex;
    align-items: center;
  }

  .vertical {
    flex-direction: column;
    padding: 4px 2px 4px 0;
  }

  .horizontal {
    padding: 0 4px;
  }

  .thumb {
    background: #cdcdcd;
  }

  .vertical .thumb {
    width: 15px;
    height: 12%;
    margin: 160px 0 auto;
  }

  .horizontal .thumb {
    width: 18%;
    height: 14px;
    margin: 0 auto 0 32%;
  }

  /* fill and stroke dialog */
  .dialog {
    flex: none;
    width: 33%;
    margin: 1px 2px 0 5px;
    border: solid #000;
    border-width: 2px 0 0 2px;
    box-shadow: 1px 0 #fff;
  }

  .dialog header {
    display: flex;
    align-items: center;
    gap: 11px;
    height: 22px;
    padding-right: 6px;
    border-bottom: 1px solid #aaa;
  }

  .dialog h2 {
    flex: 1;
    margin-left: -11px;
    white-space: nowrap;
  }

  .dialog header button svg {
    fill: none;
    stroke: #666;
  }

  .tabs {
    display: flex;
    align-items: flex-end;
    height: 29px;
    padding-left: 4px;
  }

  .tabs button {
    display: flex;
    align-items: center;
    gap: 4px;
    height: 21px;
    padding: 0 4px 0 3px;
    border: 1px solid #dcdcdc;
    border-width: 1px 1px 0 0;
    white-space: nowrap;
  }

  .tabs button[aria-selected='true'] {
    height: 24px;
    padding: 0 6px 0 4px;
    border-left-width: 1px;
    background: #fff;
  }

  .page {
    height: 253px;
    margin: 0 6px 0 4px;
    padding: 8px 6px 0 7px;
    border: 1px solid #dcdcdc;
    border-top: 0;
    background: #fff;
  }

  .paints {
    display: flex;
    margin-bottom: 11px;
  }

  .paints button {
    display: grid;
    place-items: center;
    width: 30px;
    height: 29px;
  }

  .paints .rule {
    width: 19px;
  }

  .paints .first {
    margin-left: auto;
  }

  .slider {
    display: flex;
    height: 23px;
    margin: 4px 6px 5px 4px;
  }

  .slider .spin {
    height: auto;
  }

  .track {
    display: flex;
    align-items: center;
    flex: 1;
    padding: 0 2px 0 5px;
    border: 1px solid #aaa;
    background: #fff;
  }

  .full .track {
    border: 2px solid #555;
    border-color: #666 #444 #444 #666;
    padding: 0 1px 0 4px;
    background: #b4c0d0;
  }

  .track input {
    flex: 1;
    min-width: 0;
    text-align: right;
  }

  .snapbar {
    display: flex;
    flex-direction: column;
    align-items: center;
    flex: none;
    width: 31px;
    padding-top: 2px;
    background: #fff;
    border-left: 1px solid #ddd;
  }

  .hsep {
    flex: none;
    width: 16px;
    height: 12px;
    background: linear-gradient(#aaa, #aaa) 0 5px / 100% 1px no-repeat;
  }

  /* palette */
  .palette {
    display: flex;
    height: 18px;
    padding: 0 2px 0 1px;
    border-top: 1px solid #aaa;
    background: #f0f0f0;
  }

  .swatches {
    display: flex;
    flex: 1;
    min-width: 0;
    margin-right: 2px;
    overflow: hidden;
    border: solid #000;
    border-width: 1px 0 0 1px;
  }

  .swatches button {
    flex: none;
    width: 14px;
    height: 15px;
  }

  .swatches .none {
    background: #fff;
  }

  .swatches .dither {
    background-image: radial-gradient(rgba(150, 70, 60, 0.45) 1px, transparent 1px);
    background-size: 3px 3px;
  }

  .palette-menu {
    align-self: flex-start;
    width: 8px;
    padding-top: 1px;
  }

  .palette-scroll {
    display: flex;
    align-items: center;
    height: 17px;
    padding: 0 12px 0 3px;
    border-top: 1px solid #fff;
    background: #f0f0f0;
  }

  .palette-scroll .thumb {
    width: 16%;
    height: 14px;
    margin: 0 auto 0 4px;
  }

  .palette-scroll .chevron:first-child path {
    stroke: #bbb;
  }

  /* status bar */
  footer {
    display: flex;
    align-items: center;
    height: 28px;
    padding: 0 1px 0 2px;
    background: #f0f0f0;
  }

  .style {
    display: grid;
    grid-template-columns: 46px 64px 9px;
    flex: none;
    column-gap: 2px;
  }

  .style em {
    padding-left: 22px;
  }

  .stroke {
    background: #000;
  }

  .field {
    display: flex;
    align-items: center;
  }

  .field label {
    width: 14px;
  }

  .field input {
    width: 36px;
    height: 20px;
    padding-left: 3px;
    border: 1px solid #aaa;
    background: #fff;
  }

  .layer {
    display: flex;
    align-items: center;
    gap: 4px;
    align-self: stretch;
    margin-left: 4px;
    padding-left: 5px;
    border-left: 1px solid #aaa;
  }

  .layer .eye {
    margin-right: 6px;
  }

  .layer .select {
    width: 83px;
    height: 28px;
  }

  .layer select {
    font-size: 10px;
    font-weight: 700;
  }

  footer p {
    flex: 1;
    min-width: 0;
    padding-left: 2px;
    white-space: nowrap;
  }

  dl {
    display: grid;
    grid-template-columns: 14px 46px;
    padding-left: 3px;
    border-left: 1px solid #aaa;
  }

  dd {
    font-family: "DejaVu Sans Mono", monospace;
    font-size: 11px;
    text-align: right;
  }

  .zoom {
    padding-left: 9px;
  }

  .zoom label {
    width: 12px;
  }

  .zoom input {
    width: 44px;
    padding-left: 6px;
  }
</style>
